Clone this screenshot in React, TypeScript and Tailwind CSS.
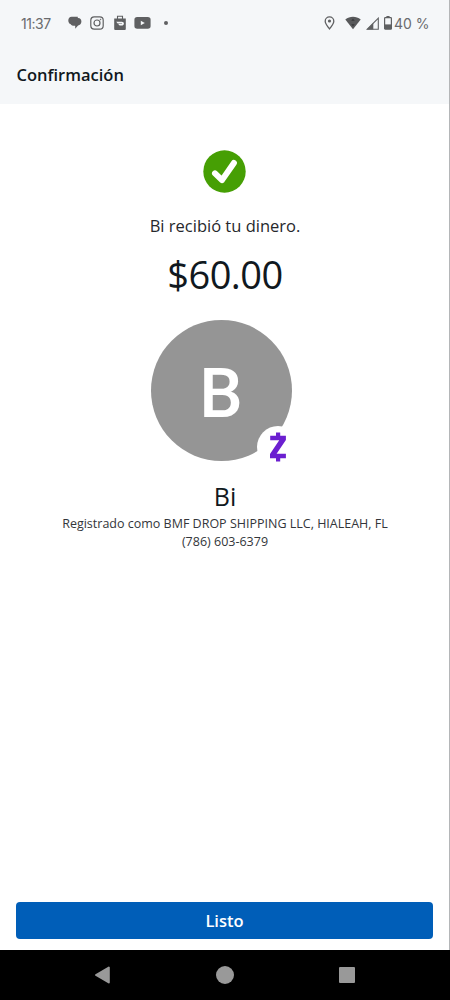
import React from 'react';

function ChatIcon() {
  return (
    <svg width="14" height="14" viewBox="0 0 14 14" className="text-[#5f6062]" fill="currentColor">
      <path d="M3.6.8h6.200v1.400L5 3.400 2.600 8.200C1.200 7.600.3 6 .3 4.400.3 2.300 1.700.8 3.600.8z" />
      <path d="M5.200 2h5c2 0 3.200 1.500 3.200 3.400 0 2.200-1.500 3.700-3.300 4L7.200 12.800V9.800H5.400C3.500 9.800 2.200 8.200 2.200 6c0-2.400 1.200-4 3-4z" />
    </svg>
  );
}

function InstagramIcon() {
  return (
    <svg width="14" height="14" viewBox="0 0 14 14" className="text-[#5f6062]" fill="none" stroke="currentColor" strokeWidth="1.2">
      <rect x=".8" y=".8" width="12.4" height="12.4" rx="3.4" />
      <circle cx="7" cy="7" r="3" />
      <circle cx="10.5" cy="3.5" r=".45" fill="currentColor" strokeWidth=".6" />
    </svg>
  );
}

function BagIcon() {
  return (
    <svg width="12" height="16" viewBox="0 0 12 16" className="text-[#5f6062]" fill="none">
      <path d="M3.5 4V1.200h5V4" stroke="currentColor" strokeWidth="1.1" />
      <path d="M.2 3.400h11.600V14q0 1-1 1H1.200q-1 0-1-1z" fill="currentColor" />
      <path d="M2.200 6.800h5.500c1.500 0 2.300.9 2.200 1.900-.1 1.100-1 1.800-2.200 1.800H5.600L4.200 9.100h3.400c.7 0 .7-.7 0-.7H3.700z" fill="#f5f7f9" />
    </svg>
  );
}

function YoutubeIcon() {
  return (
    <svg width="17" height="12" viewBox="0 0 17 12">
      <rect x=".4" y=".1" width="16.2" height="11.7" rx="2.8" fill="#5f6062" />
      <path d="M6.800 3.700v4.600l4-2.300z" fill="#f5f7f9" />
    </svg>
  );
}

function PinIcon() {
  return (
    <svg width="11" height="14" viewBox="0 0 11 14" className="text-[#5f6062]" fill="none">
      <path d="M5.500 12.900C3 9.800 1.200 7.400 1.200 5.200a4.300 4.300 0 0 1 8.600 0c0 2.200-1.800 4.600-4.300 7.700z" stroke="currentColor" strokeWidth="1.3" />
      <circle cx="5.500" cy="5" r="1.600" fill="currentColor" />
    </svg>
  );
}

function WifiIcon() {
  return (
    <svg width="16" height="14" viewBox="0 0 16 14">
      <path d="M.3 3.400C4.800-.3 11.200-.3 15.700 3.400L8 13.200z" fill="#58595b" />
      <path d="M8 2.700l1.800 2H6.200zM8 10.200l-1.700-2h3.400z" fill="#36373a" />
    </svg>
  );
}

function SignalIcon() {
  return (
    <svg width="13" height="13" viewBox="0 0 13 13" className="text-[#5f6062]">
      <path d="M1.300 12.200L12.300 1.200v11z" fill="none" stroke="currentColor" strokeWidth="1.1" />
      <path d="M.8 12.600l6.500-6.500v6.500z" fill="currentColor" />
    </svg>
  );
}

function BatteryIcon() {
  return (
    <svg width="8" height="14" viewBox="0 0 8 14" className="text-[#5f6062]">
      <path d="M2.400 0h3.200v2H2.400z" fill="currentColor" />
      <rect x=".6" y="1.700" width="6.800" height="11.400" rx=".7" fill="none" stroke="currentColor" strokeWidth="1.2" />
      <path d="M.6 8.400h6.800v4.700H.6z" fill="currentColor" />
    </svg>
  );
}

function StatusBar() {
  return (
    <div className="flex h-[46px] items-center pr-[22px] pl-[21px] font-['Inter',sans-serif] text-[#6a6b6e]">
      <span className="w-[47px] whitespace-nowrap text-[14px] tracking-[-0.45px]">11:37</span>
      <ChatIcon />
      <div className="ml-[8px]"><InstagramIcon /></div>
      <div className="ml-[10px]"><BagIcon /></div>
      <div className="ml-[8px]"><YoutubeIcon /></div>
      <div className="ml-[13px] size-1 rounded-full bg-[#5f6062]" />
      <div className="ml-auto flex items-center">
        <PinIcon />
        <div className="ml-[10px]"><WifiIcon /></div>
        <div className="ml-[5px]"><SignalIcon /></div>
        <div className="ml-[5px]"><BatteryIcon /></div>
        <span className="ml-[2px] w-[34px] whitespace-nowrap text-[14px]">40 %</span>
      </div>
    </div>
  );
}

function Avatar() {
  return (
    <div className="relative mt-[22px] mr-[8px] flex size-[141px] items-center justify-center rounded-full bg-[#959595]">
      <span className="pt-[5px] font-['Roboto',sans-serif] text-[69px] leading-none font-medium text-white">B</span>
      <div className="absolute top-[106px] left-[106px] flex size-[42px] items-center justify-center rounded-full bg-white">
        <svg width="18" height="30" viewBox="0 0 18 30" fill="#6b1fd0">
          <path d="M7 .5h4.200v5H7zM7 24.500h4.200v5H7z" />
          <path d="M1.200 3.800h15.700v4.200L7.600 21.800h9.300v4.500H1V22L10.200 8.300h-9z" />
        </svg>
      </div>
    </div>
  );
}

export default function App() {
  return (
    <div className="relative flex h-[1000px] w-[450px] flex-col overflow-hidden bg-white font-['Open_Sans',sans-serif] text-[#101820]">
      <header className="h-[104px] shrink-0 bg-[#f5f7f9]">
        <StatusBar />
        <h1 className="mt-[17px] pl-[16.5px] text-[16.5px] leading-6 font-semibold">Confirmación</h1>
      </header>

      <main className="flex flex-1 flex-col items-center pt-[46px]">
        <svg width="43" height="43" viewBox="0 0 43 43" className="mr-px">
          <circle cx="21.5" cy="21.5" r="21.2" fill="#469f04" />
          <path d="M12 23.400l7 6.700L30.900 13" fill="none" stroke="#fff" strokeWidth="6" strokeLinecap="round" strokeLinejoin="round" />
        </svg>
        <p className="mt-[21px] text-[16.5px] leading-6 text-[#26282c]">Bi recibió tu dinero.</p>
        <p className="mt-[12px] text-[38px] leading-12 tracking-[-0.5px]">$60.00</p>
        <Avatar />
        <h2 className="mt-[19px] text-[25px] leading-8">Bi</h2>
        <p className="mt-[3px] text-[12.5px] leading-[18px] whitespace-nowrap text-[#33363a]">
          Registrado como BMF DROP SHIPPING LLC, HIALEAH, FL
        </p>
        <p className="text-[12.5px] leading-[18px] text-[#33363a]">(786) 603-6379</p>
      </main>

      <div className="pr-[17px] pb-[11px] pl-4">
        <button className="h-[37px] w-full rounded-[4px] bg-[#005eb8] pt-px text-[16.5px] font-semibold text-white">Listo</button>
      </div>

      <nav className="flex h-[50px] shrink-0 items-center bg-black">
        <svg width="16" height="18" viewBox="0 0 16 18" className="ml-[94px]">
          <path d="M14.800 1.500v15L2 9z" fill="#999" stroke="#999" strokeWidth="2" strokeLinejoin="round" />
        </svg>
        <div className="ml-[106px] size-[18px] rounded-full bg-[#999]" />
        <div className="ml-[105px] size-[16px] rounded-[1px] bg-[#999]" />
      </nav>

      {/* screen edge */}
      <div className="absolute top-0 right-0 h-[950px] w-px bg-[#b4b6b8]" />
    </div>
  );
}
